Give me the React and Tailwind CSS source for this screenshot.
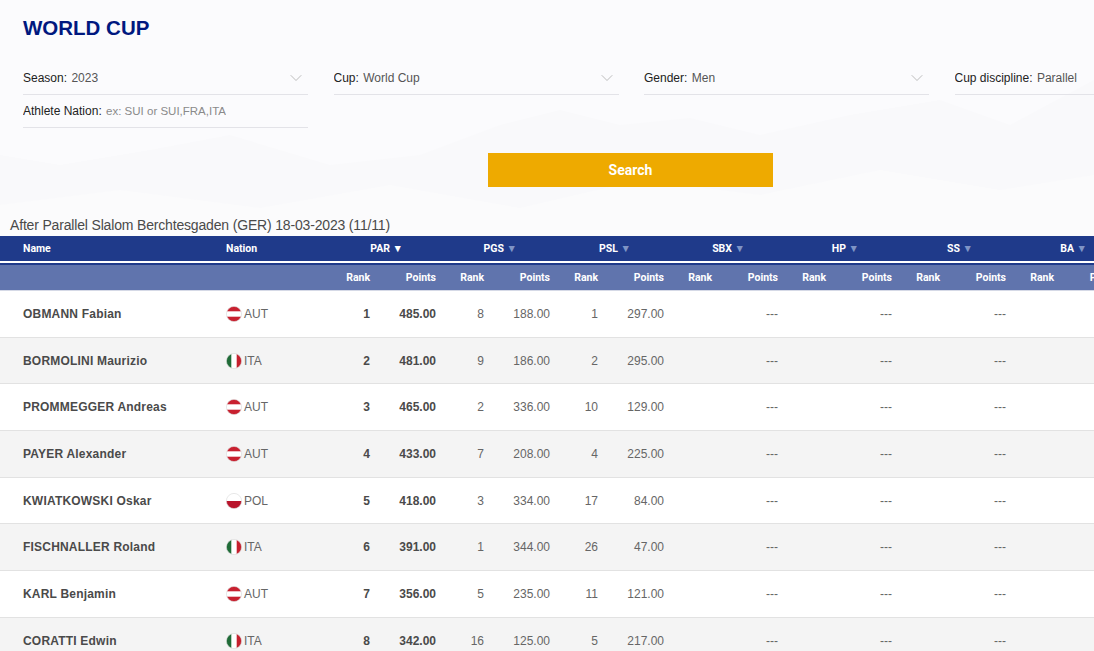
import { ChevronDown } from 'lucide-react'

const ROWS = [
    { name: 'OBMANN Fabian', nation: 'AUT', rank: 1, points: '485.00', pgs: [8, '188.00'], psl: [1, '297.00'] },
    { name: 'BORMOLINI Maurizio', nation: 'ITA', rank: 2, points: '481.00', pgs: [9, '186.00'], psl: [2, '295.00'] },
    { name: 'PROMMEGGER Andreas', nation: 'AUT', rank: 3, points: '465.00', pgs: [2, '336.00'], psl: [10, '129.00'] },
    { name: 'PAYER Alexander', nation: 'AUT', rank: 4, points: '433.00', pgs: [7, '208.00'], psl: [4, '225.00'] },
    { name: 'KWIATKOWSKI Oskar', nation: 'POL', rank: 5, points: '418.00', pgs: [3, '334.00'], psl: [17, '84.00'] },
    { name: 'FISCHNALLER Roland', nation: 'ITA', rank: 6, points: '391.00', pgs: [1, '344.00'], psl: [26, '47.00'] },
    { name: 'KARL Benjamin', nation: 'AUT', rank: 7, points: '356.00', pgs: [5, '235.00'], psl: [11, '121.00'] },
    { name: 'CORATTI Edwin', nation: 'ITA', rank: 8, points: '342.00', pgs: [16, '125.00'], psl: [5, '217.00'] },
]

const DISCIPLINES = ['PAR', 'PGS', 'PSL', 'SBX', 'HP', 'SS', 'BA']
const COLS = 'grid grid-cols-[226px_96px_repeat(7,48px_66px)] w-[1220px]'
const ARIAL = 'font-["Liberation_Sans",Arial,sans-serif]'
const ROBOTO = 'font-["Roboto",sans-serif]'

function Flag({ nation }) {
    return (
        <svg viewBox="0 0 16 16" className="w-4 h-4 shrink-0">
            <defs>
                <clipPath id={`flag-${nation}`}>
                    <circle cx="8" cy="8" r="7.6" />
                </clipPath>
            </defs>
            <g clipPath={`url(#flag-${nation})`}>
                <rect width="16" height="16" fill="#fff" />
                {nation === 'AUT' && (
                    <>
                        <rect width="16" height="5.3" fill="#c8202f" />
                        <rect y="10.7" width="16" height="5.3" fill="#c8202f" />
                    </>
                )}
                {nation === 'ITA' && (
                    <>
                        <rect width="5.3" height="16" fill="#1f6b37" />
                        <rect x="10.7" width="5.3" height="16" fill="#c5202e" />
                    </>
                )}
                {nation === 'POL' && <rect y="8" width="16" height="8" fill="#b9142b" />}
            </g>
            <circle cx="8" cy="8" r="7.6" fill="none" stroke="#d8d8d8" strokeWidth="0.6" />
        </svg>
    )
}

function Filter({ label, value, placeholder, chevron = true }) {
    return (
        <div className={`h-[33px] border-b border-[#e3e3e8] flex items-center justify-between pr-[2px] text-xs ${ARIAL}`}>
            <span className="truncate">
                <span className="text-[#222] mr-[1px]">{label}:</span>{' '}
                {placeholder ? <span className="text-[#8a8a8a] text-[11.5px]">{placeholder}</span> : <span className="text-[#555]">{value}</span>}
            </span>
            {chevron && <ChevronDown className="w-5 h-5 text-[#b0b0b0]" strokeWidth={1} />}
        </div>
    )
}

function Backdrop() {
    return (
        <svg viewBox="0 0 1094 236" preserveAspectRatio="none" className="absolute inset-0 w-[1094px] h-[236px]">
            <rect width="1094" height="236" fill="#fbfbfd" />
            <path d="M0 155 L60 165 L150 150 L230 135 L330 165 L420 155 L500 125 L560 110 L620 125 L690 118 L760 135 L850 115 L940 100 L1010 125 L1094 80 V236 H0 Z" fill="#f9f9fb" />
            <path d="M0 205 L120 190 L260 208 L390 185 L520 208 L640 180 L760 195 L880 170 L1000 190 L1094 175 V236 H0 Z" fill="#fbfbfc" />
        </svg>
    )
}

export default function App() {
    return (
        <div className={`relative w-screen h-screen overflow-hidden bg-white ${ARIAL}`}>
            <Backdrop />
            <div className="relative">
                <h1 className="pl-[23px] pt-[16px] text-[20.5px] leading-[24px] font-bold text-[#00187f]">WORLD CUP</h1>

                <div className="mt-[22px] pl-[23px] grid grid-cols-[repeat(4,285px)] gap-x-[25.5px] w-[1300px]">
                    <Filter label="Season" value="2023" />
                    <Filter label="Cup" value="World Cup" />
                    <Filter label="Gender" value="Men" />
                    <Filter label="Cup discipline" value="Parallel" />
                    <Filter label="Athlete Nation" placeholder="ex: SUI or SUI,FRA,ITA" chevron={false} />
                </div>

                <div className="mt-[25px] pl-[488px]">
                    <button className={`w-[285px] h-[34px] bg-[#eeaa00] text-white text-sm font-bold ${ROBOTO}`}>Search</button>
                </div>

                <p className="mt-[28px] pl-[10px] text-sm tracking-[-0.17px] leading-[20px] text-[#4a4a4a]">
                    After Parallel Slalom Berchtesgaden (GER) 18-03-2023 (11/11)
                </p>

                {/* discipline header */}
                <div className={`${COLS} ${ROBOTO} mt-[1px] h-[25px] items-center bg-[#1f3a8a] text-white text-[10.5px] font-bold`}>
                    <span className="pl-[23px]">Name</span>
                    <span>Nation</span>
                    {DISCIPLINES.map((d, i) => (
                        <span key={d} className="col-span-2 text-right pr-[33px]">
                            {d} <span className={i === 0 ? 'text-white' : 'text-[#7f94c6]'}>▼</span>
                        </span>
                    ))}
                </div>
                <div className="h-[3.5px] bg-white border-b-2 border-[#1f3a8a]" />
                <div className={`${COLS} ${ROBOTO} h-[26.5px] pt-[1px] items-center bg-[#6074ad] text-white text-[10.5px] font-bold border-b border-[#d5d9e6]`}>
                    <span />
                    <span />
                    {DISCIPLINES.map((d) => (
                        <div key={d} className="contents">
                            <span className="text-right">Rank</span>
                            <span className="text-right">Points</span>
                        </div>
                    ))}
                </div>

                {ROWS.map((r, i) => (
                    <div key={r.name} className={`${COLS} h-[46.7px] items-center border-b border-[#e2e2e2] text-xs text-[#666] ${i % 2 ? 'bg-[#f4f4f4]' : 'bg-white'}`}>
                        <span className="pl-[23px] font-bold text-[#4a4a4a] tracking-[0.2px]">{r.name}</span>
                        <span className="flex items-center gap-[2px]">
                            <Flag nation={r.nation} />
                            {r.nation}
                        </span>
                        <span className="text-right font-bold text-[#4a4a4a]">{r.rank}</span>
                        <span className="text-right font-bold text-[#4a4a4a]">{r.points}</span>
                        <span className="text-right">{r.pgs[0]}</span>
                        <span className="text-right">{r.pgs[1]}</span>
                        <span className="text-right">{r.psl[0]}</span>
                        <span className="text-right">{r.psl[1]}</span>
                        {['SBX', 'HP', 'SS', 'BA'].map((d) => (
                            <div key={d} className="contents">
                                <span />
                                <span className="text-right">---</span>
                            </div>
                        ))}
                    </div>
                ))}
            </div>
        </div>
    )
}
